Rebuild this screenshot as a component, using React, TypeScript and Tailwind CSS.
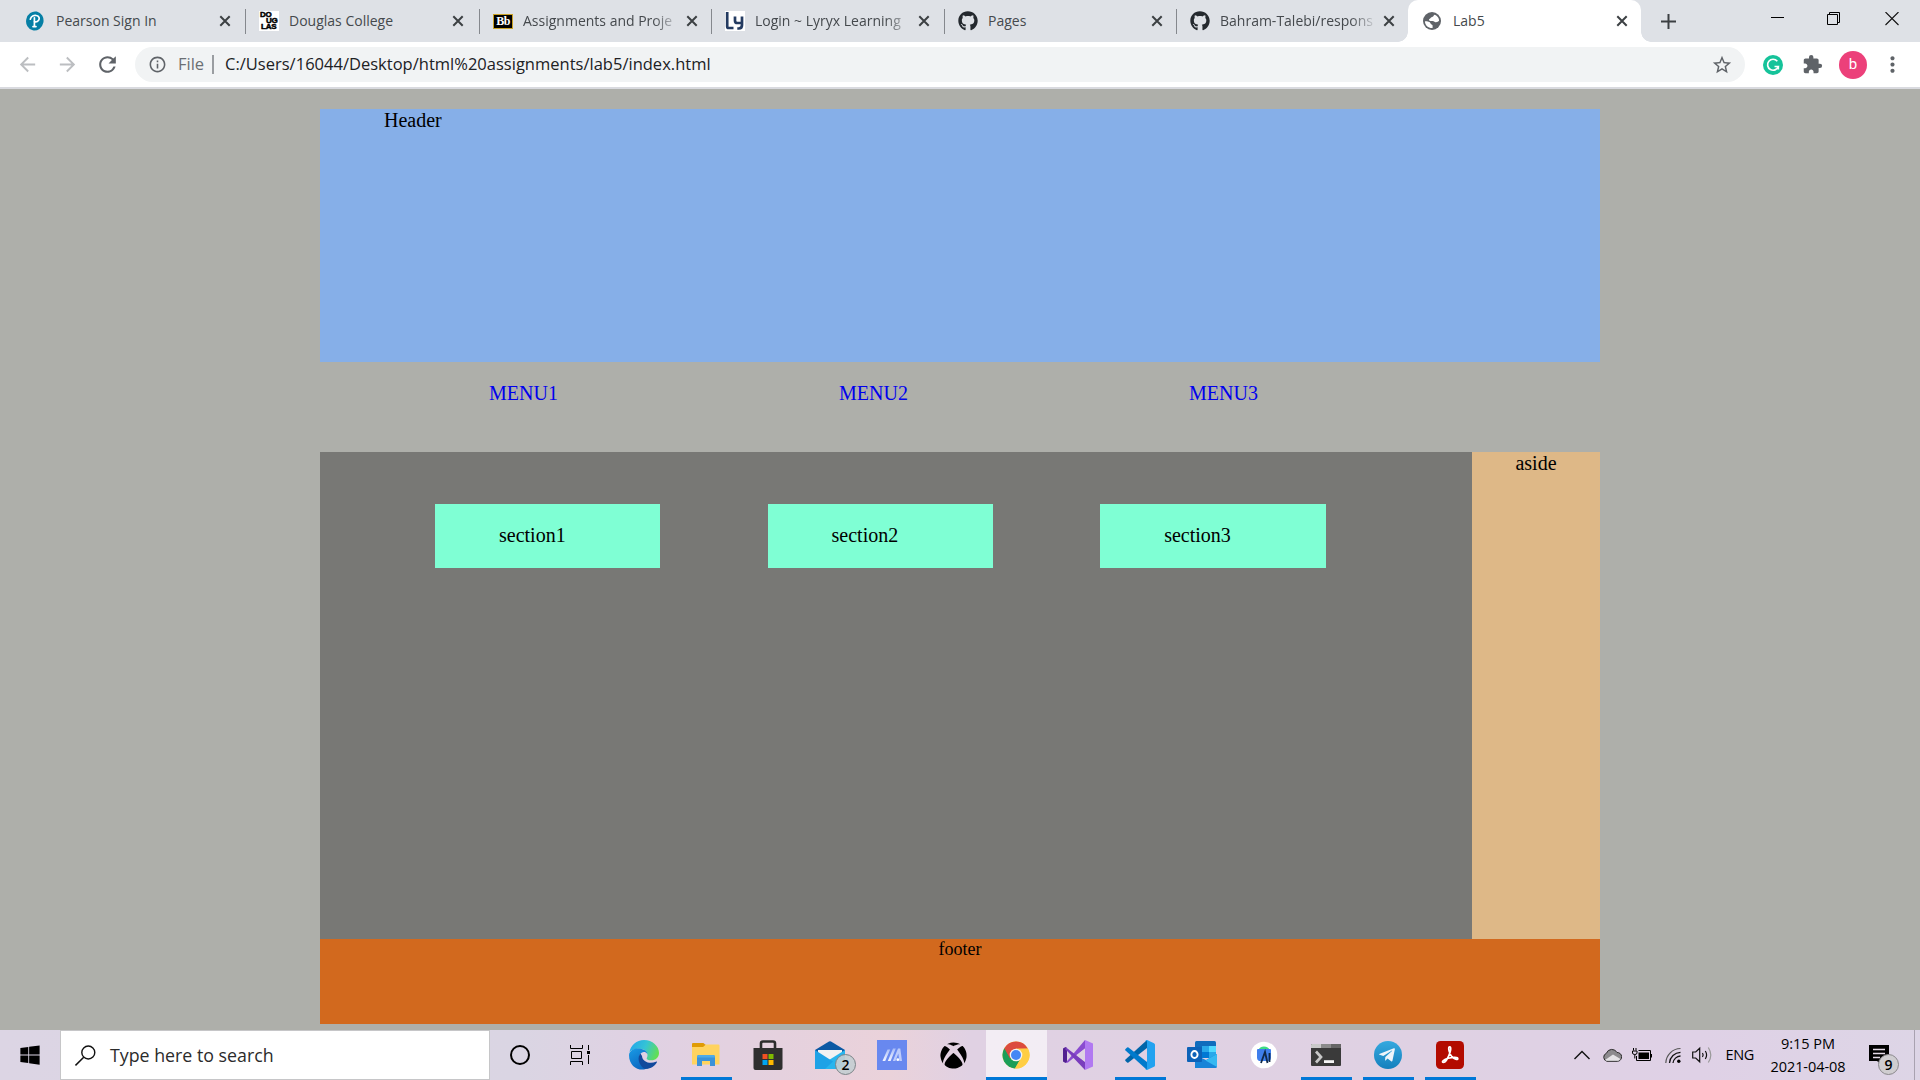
import type { ReactNode } from "react";
import { FaGithub, FaWindows, FaXbox, FaTelegramPlane } from "react-icons/fa";
import {
  MdArrowBack,
  MdArrowForward,
  MdExtension,
  MdInfoOutline,
  MdMoreVert,
  MdRefresh,
  MdStarBorder,
} from "react-icons/md";

/* ---------- Favicons ---------- */

const PearsonIcon = () => (
  <svg width="20" height="20" viewBox="0 0 20 20" className="-ml-px">
    <ellipse cx="9.8" cy="10" rx="8.7" ry="9.6" fill="#067fa5" transform="rotate(12 10 10)" />
    <path
      d="M5.3 8.2C6.2 5.3 9 4 11.4 4.5c2.700.5 3.500 3 2.200 4.800-1 1.400-2.700 1.800-4.400 1.300M9.400 6.800v8.600M8 15.600h3"
      fill="none"
      stroke="#fff"
      strokeWidth="1.7"
      strokeLinecap="round"
    />
  </svg>
);

const DouglasIcon = () => (
  <span className="flex h-5 w-5 flex-col bg-white pl-px font-['Liberation_Sans'] text-[8px] leading-[6px] font-bold tracking-[-0.2px] text-black [-webkit-text-stroke:0.5px_black]">
    <span className="pt-px">DO</span>
    <span className="pl-[6px]">UG</span>
    <span className="pl-px">LAS</span>
  </span>
);

const BlackboardIcon = () => (
  <span className="flex h-[15px] w-5 items-center justify-center border border-[#c9a227] bg-black font-['Liberation_Serif'] text-[12px] leading-none font-bold tracking-[-0.5px] text-white">
    Bb
  </span>
);

const LyryxIcon = () => (
  <svg width="20" height="20" viewBox="0 0 20 20">
    <rect width="20" height="20" fill="#fff" />
    <path
      d="M2.200 1v14.500q0 1.500 1.500 1.500H8.500M10 5.500v4.200q0 2.300 2.300 2.300h4.200M17 5.500v8.500q0 3.500-3.200 3.500h-1.500"
      fill="none"
      stroke="#243b61"
      strokeWidth="2.700"
    />
  </svg>
);

const GithubIcon = () => <FaGithub size={20} className="text-[#24292e]" />;

const GlobeIcon = () => (
  <svg width="18" height="18" viewBox="0 0 18 18">
    <circle cx="9" cy="9" r="9" fill="#5f6368" />
    <path
      d="M11 2.800c0 1.700-1.600 2.200-2.600 2.500-.9.300-1 1.700-2.400 1.900 0 1.200.3 1.700 1.500 1.700h2.200c1.300 0 1.600 1.100 2.800 1.300 1.500.2 2.800-.5 3.600-1.400C16.100 5.600 13.700 3 11 2.800z"
      fill="#fff"
    />
    <path d="M1.900 9.300c2.800 0 5.200.5 5.700 2.100.3 1.100 2 .9 2 2.200v2.500C5.500 16.400 2 13.500 1.900 9.300z" fill="#fff" />
  </svg>
);

const CloseX = () => (
  <svg width="12" height="12" viewBox="0 0 12 12" className="shrink-0">
    <path d="M1.300 1.300l9.400 9.400M10.700 1.300l-9.400 9.400" stroke="#3c4043" strokeWidth="2" />
  </svg>
);

type TabData = { title: string; icon: ReactNode; width?: string; faded?: boolean };

const tabs: TabData[] = [
  { title: "Pearson Sign In", icon: <PearsonIcon />, width: "w-[233px]" },
  { title: "Douglas College", icon: <DouglasIcon />, width: "w-[234px]" },
  { title: "Assignments and Proje", icon: <BlackboardIcon />, width: "w-[232px]", faded: true },
  { title: "Login ~ Lyryx Learning", icon: <LyryxIcon />, width: "w-[233px]", faded: true },
  { title: "Pages", icon: <GithubIcon />, width: "w-[232px]" },
  { title: "Bahram-Talebi/respons", icon: <GithubIcon />, width: "w-[232px]", faded: true },
];

function TabContent({ tab }: { tab: TabData }) {
  return (
    <>
      <span className="flex w-[30px] shrink-0 items-center">{tab.icon}</span>
      <span
        className={
          tab.faded
            ? "-mt-0.5 w-[154px] shrink-0 [mask-image:linear-gradient(to_right,black_130px,transparent_158px)]"
            : "-mt-0.5 w-[154px] shrink-0"
        }
      >
        {tab.title}
      </span>
      <span className="ml-[9px] flex">
        <CloseX />
      </span>
    </>
  );
}

function TabStrip() {
  return (
    <div className="flex h-[42px] bg-[#dee1e6] pl-[12px] text-[14px] whitespace-nowrap text-[#45494d]">
      {tabs.map((tab, i) => (
        <div key={tab.title} className={`flex h-[42px] shrink-0 items-center ${tab.width}`}>
          <span className={i === 0 ? "h-[25px] w-px shrink-0" : "h-[25px] w-px shrink-0 bg-[#85888d]"} />
          <span className="w-[13px] shrink-0" />
          <TabContent tab={tab} />
        </div>
      ))}
      <div className="relative flex h-[42px] w-[233px] shrink-0 items-center rounded-t-[10px] bg-white pl-[15px]">
        <span className="absolute bottom-0 -left-[10px] h-[10px] w-[10px] bg-[radial-gradient(circle_at_0_0,transparent_9.500px,white_10px)]" />
        <span className="absolute -right-[10px] bottom-0 h-[10px] w-[10px] bg-[radial-gradient(circle_at_100%_0,transparent_9.500px,white_10px)]" />
        <TabContent tab={{ title: "Lab5", icon: <GlobeIcon /> }} />
      </div>
      <svg width="15" height="15" viewBox="0 0 15 15" className="mt-[14px] ml-[20px]">
        <path d="M7.500 0v15M0 7.500h15" stroke="#3c4043" strokeWidth="2" />
      </svg>
      <div className="mt-[11px] mr-[21px] ml-auto flex h-4 items-center">
        <svg width="14" height="14" viewBox="0 0 14 14">
          <path d="M0 5.500h13" stroke="#000" />
        </svg>
        <svg width="14" height="14" viewBox="0 0 14 14" className="ml-[42px]">
          <path d="M.5 2.500h10v10h-10zM2.500 2.500v-2h10v10h-2" fill="none" stroke="#000" />
        </svg>
        <svg width="14" height="14" viewBox="0 0 14 14" className="ml-[44px]">
          <path d="M.5 0l13 13M13.500 0l-13 13" stroke="#111" strokeWidth="1.100" />
        </svg>
      </div>
    </div>
  );
}

function Toolbar() {
  return (
    <div className="flex h-[47px] items-center border-b-2 border-[#d9dadf] bg-white">
      <MdArrowBack size={23} className="ml-4 text-[#bcbec1]" />
      <MdArrowForward size={23} className="ml-[17px] text-[#bcbec1]" />
      <MdRefresh size={25} className="ml-4 text-[#5f6368]" />
      <div className="ml-[15px] flex h-[35px] w-[1610px] items-center rounded-full bg-[#f1f3f4] whitespace-nowrap">
        <MdInfoOutline size={19} className="ml-[13px] text-[#5f6368]" />
        <span className="ml-[11px] w-[34px] text-[16.500px] text-[#6b6f74]">File</span>
        <span className="h-[19px] w-0.5 bg-[#9a9da1]" />
        <span className="ml-[11px] text-[16.500px] tracking-[0.010px] text-[#202124]">
          C:/Users/16044/Desktop/html%20assignments/lab5/index.html
        </span>
        <MdStarBorder size={22} className="mr-[12px] ml-auto text-[#5f6368]" />
      </div>
      <svg width="20" height="20" viewBox="0 0 20 20" className="ml-[17.500px]">
        <circle cx="10" cy="10" r="10" fill="#15c39a" />
        <path
          d="M14.300 6.200A5.500 5.500 0 1 0 15.300 11.500H11.500M15.300 11v3.500"
          fill="none"
          stroke="#fff"
          strokeWidth="1.700"
        />
      </svg>
      <MdExtension size={21} className="ml-[19px] text-[#5f6368]" />
      <span className="ml-[16.500px] flex h-7 w-7 items-center justify-center rounded-full bg-[#ec407a] font-['Roboto'] text-[15px] leading-none text-white">
        b
      </span>
      <MdMoreVert size={25} className="ml-[13px] text-[#5f6368]" />
    </div>
  );
}

/* ---------- Web page ---------- */

function Page() {
  return (
    <div className="h-[941px] bg-[#aeafaa] pt-[20px] font-['Liberation_Serif',serif] text-[20px] leading-[23px] text-black">
      <div className="mx-auto w-[1280px]">
        <header className="h-[253px] bg-[#86afe8] pl-[64px]">Header</header>
        <nav className="flex h-[90px] pt-[20px] pl-[169px] text-[#0000ee]">
          {["MENU1", "MENU2", "MENU3"].map((m) => (
            <a key={m} className="w-[350px]">
              {m}
            </a>
          ))}
        </nav>
        <div className="flex h-[487px]">
          <main className="flex w-[1152px] gap-[107.200px] bg-[#787875] pt-[52px] pl-[115px]">
            {["section1", "section2", "section3"].map((s) => (
              <section key={s} className="h-[64px] w-[225.400px] bg-[#7fffd4] pt-[20px] pl-[64px]">
                {s}
              </section>
            ))}
          </main>
          <aside className="w-[128px] bg-[#deb887] text-center">aside</aside>
        </div>
        <footer className="h-[85px] bg-[#d2691e] text-center text-[18px] leading-[20px]">footer</footer>
      </div>
    </div>
  );
}

/* ---------- Taskbar icons ---------- */

const EdgeIcon = () => (
  <svg width="30" height="30" viewBox="0 0 30 30">
    <defs>
      <linearGradient id="edgeTop" x1="0" y1="0.300" x2="1" y2="0.600">
        <stop offset="0" stopColor="#22a7ea" />
        <stop offset="0.500" stopColor="#35c4d5" />
        <stop offset="1" stopColor="#64e04e" />
      </linearGradient>
      <linearGradient id="edgeLeft" x1="0" y1="0" x2="0.600" y2="1">
        <stop offset="0" stopColor="#1a9be5" />
        <stop offset="1" stopColor="#0a66c0" />
      </linearGradient>
    </defs>
    <path d="M.5 12C1.800 5 7.500 0 15 0c8.500 0 15 6.200 15 13 0 4.500-3.500 7.300-7.500 7.300-3.500 0-5.500-1.200-4.600-2.600C19.800 14.500 17.500 9 11 8.700 6.500 8.500 2 10 .5 12z" fill="url(#edgeTop)" />
    <path d="M0 15C.5 10.500 5 8.600 9.500 8.600c4.500 0 8.300 2.300 9 5.400-2-3-6-2.600-7.500.5C8.500 20 13 27.500 20 27.800 12 32.500 0 28 0 15z" fill="url(#edgeLeft)" />
    <path d="M11.500 13.500C8 17 9.300 25 15.500 28.700c5.500.8 10-2.500 12.300-6.200.4-.8-.2-1.200-.9-.8-5.400 2.700-13.600.5-13.900-5.700z" fill="#11499c" />
  </svg>
);

const ExplorerIcon = () => (
  <svg width="30" height="30" viewBox="0 0 30 30">
    <path d="M1 4q0-1 1-1h10q1 0 1.500 1l1.500 1-2 4H1z" fill="#e09b05" />
    <path d="M1 7h11l3-2.500h12.500q1 0 1 1V24.500H1z" fill="#ffd35f" />
    <path d="M6 26V17q0-2 2-2h14q2 0 2 2v9h-5v-5h-8v5z" fill="#3b92d9" />
    <path d="M6 16.500q0-1.500 2-1.500h14q2 0 2 1.500v1H6z" fill="#4fabe8" />
  </svg>
);

const StoreIcon = () => (
  <svg width="30" height="30" viewBox="0 0 30 30" className="-ml-px">
    <path d="M8 9V3.500Q8 1.500 10 1.500h10q2 0 2 2V9" fill="none" stroke="#2c2c2c" strokeWidth="2.600" />
    <path d="M.5 8h29v20q0 2-2 2h-25q-2 0-2-2z" fill="#2f2f2f" />
    <path d="M9.500 14h5v5h-5z" fill="#f25022" />
    <path d="M15.500 14h5v5h-5z" fill="#7fba00" />
    <path d="M9.500 20h5v5h-5z" fill="#00a4ef" />
    <path d="M15.500 20h5v5h-5z" fill="#ffb900" />
  </svg>
);

const MailIcon = () => (
  <span className="relative flex">
    <svg width="30" height="30" viewBox="0 0 30 30">
      <path d="M0 10L14 1.500q1-.5 2 0L30 10v7H0z" fill="#0c59a4" />
      <path d="M3 10h24v10H3z" fill="#f2f2f2" />
      <path d="M30 10v19H0l14-9z" fill="#28b5ee" />
      <path d="M0 10v19h10l8-7.500z" fill="#1ea2e6" />
    </svg>
    <span className="absolute top-[14px] left-[20px] flex h-[21px] w-[21px] items-center justify-center rounded-full border border-[#7b8488] bg-[#c4ced2]/90 text-[14px] leading-none font-semibold text-black">
      2
    </span>
  </span>
);

const MaIcon = () => (
  <svg width="30" height="30" viewBox="0 0 30 30">
    <defs>
      <linearGradient id="maStroke" x1="0" y1="1" x2="0" y2="0">
        <stop offset="0" stopColor="#f2f5ff" />
        <stop offset="1" stopColor="#a9bcf8" />
      </linearGradient>
    </defs>
    <rect width="30" height="30" fill="#6888ef" />
    <path d="M5.500 21l5-11.500h2.700l-5 11.500zM10.800 21L16 8.500h2.800L13.600 21z" fill="url(#maStroke)" />
    <path d="M15.800 21l5.200-12.500h2.300L25 21h-2.600l-1.100-7.500L18.400 21z" fill="#bccbfc" />
    <circle cx="20.800" cy="19.700" r="1.400" fill="#fff" />
  </svg>
);

const ChromeIcon = () => (
  <svg width="28" height="28" viewBox="0 0 28 28" className="-ml-px">
    <circle cx="14" cy="14" r="13.500" fill="#ffce44" />
    <path d="M14 14L2.300 7.200A13.500 13.500 0 0 0 13 27.500l6-10.500z" fill="#1b9e58" />
    <path d="M14 14L8 17.500 2.300 7.250A13.500 13.500 0 0 1 25.800 7.500L14 7.800z" fill="#dc4b3e" />
    <path d="M14 7.800h12A13.500 13.500 0 0 1 13 27.500l6.300-11z" fill="#ffce44" />
    <circle cx="14" cy="14" r="6.300" fill="#f4f4f4" />
    <circle cx="14" cy="14" r="5" fill="#4587f4" />
  </svg>
);

const VisualStudioIcon = () => (
  <svg width="30" height="30" viewBox="0 0 30 30">
    <path d="M0 8.500L2.500 7 4 8v14l-1.500 1L0 21.500z" fill="#52218f" />
    <path d="M2.500 23L22 0v8.500L5 22.500z" fill="#8a4bd0" />
    <path d="M2.500 7L22 22v8L2.500 9.500z" fill="#7a3dbd" />
    <path d="M4 11.300v7.400l3.700-3.700z" fill="#dfd2e3" />
    <path d="M22 0l8 3.500v23L22 30z" fill="#b179f1" />
    <path d="M22 8.500v13L13.500 15z" fill="#dfd2e3" />
  </svg>
);

const VSCodeIcon = () => (
  <svg width="30" height="30" viewBox="0 0 30 30">
    <path d="M22 0v8L3.500 22.500q-.7.500-1.400 0L.5 21q-.7-.7 0-1.400z" fill="#0065a9" />
    <path d="M22 30v-8L3.500 7.500q-.7-.5-1.400 0L.5 9q-.7.7 0 1.400z" fill="#007acc" />
    <path d="M22 0l7 3.300q1 .5 1 1.500v20.400q0 1-1 1.500L22 30q-1 .3-1.800-.5 1.800.5 1.800-1.500V2q0-2-1.800-1.500Q21-.3 22 0z" fill="#22a2f0" />
  </svg>
);

const OutlookIcon = () => (
  <svg width="30" height="30" viewBox="0 0 30 30">
    <path d="M8 2.500q0-1.500 1.500-1.500h18q1.500 0 1.500 1.500V16H8z" fill="#0f6cbd" />
    <path d="M15 6h7v7h-7z" fill="#28a8ea" />
    <path d="M22 6h7v7h-7z" fill="#50d9ff" />
    <path d="M15 12h7v6h-7z" fill="#0078d4" />
    <path d="M22 12h7v6h-7z" fill="#28a8ea" />
    <path d="M8 28h20.500q1.500 0 1.500-1.500V14L19 20 8 15z" fill="#1784d8" />
    <path d="M30 14v13L18.500 20.500z" fill="#35b8f1" />
    <rect y="7" width="15" height="15" rx="1" fill="#0c62b8" />
    <ellipse cx="7.500" cy="14.500" rx="3.100" ry="3.500" fill="none" stroke="#fff" strokeWidth="1.900" />
  </svg>
);

const AndroidStudioIcon = () => (
  <svg width="28" height="28" viewBox="0 0 28 28" className="-ml-px">
    <circle cx="14" cy="14" r="13.300" fill="#fff" />
    <path d="M8.500 9q1-3.500 5.500-3.500T19.500 9z" fill="#3ddc84" />
    <path d="M7 9q0-1 1-1h12q1 0 1 1v8q0 2-2 3h-10q-2-1-2-3z" fill="#3f7fec" />
    <path d="M11 22l4-11 2.500 11M19.500 12v9" fill="none" stroke="#10294a" strokeWidth="1.800" />
  </svg>
);

const TerminalIcon = () => (
  <svg width="30" height="22" viewBox="0 0 30 22">
    <rect width="30" height="22" rx="1" fill="#3a3a3a" />
    <path d="M0 4V1q0-1 1-1h9v4z" fill="#c9c9c9" />
    <path d="M10 0h10v4H10z" fill="#8b8b8b" />
    <path d="M20 0h9q1 0 1 1v3H20z" fill="#666" />
    <path d="M5 7.500l5 5.500-5 5.500" fill="none" stroke="#c8c8c8" strokeWidth="2.700" />
    <path d="M13 17.600h10" stroke="#f5f5f5" strokeWidth="2.800" />
  </svg>
);

const TelegramIcon = () => (
  <span className="flex h-7 w-7 items-center justify-center rounded-full bg-linear-to-b from-[#35a9df] to-[#1480bd] pr-0.5 text-[#eef5fa]">
    <FaTelegramPlane size={18} />
  </span>
);

const AcrobatIcon = () => (
  <svg width="28" height="28" viewBox="0 0 28 28">
    <rect width="28" height="28" rx="4.500" fill="#b30b00" />
    <path
      d="M13.200 6c1.700-1 2 2 .8 5.500C12.500 16 9.500 21.500 7.300 21.500c-2.300-.4.500-3 5-4.200 4.500-1.200 9.500-1.300 9.500.4 0 1.600-3.300.7-6-2.200C13.300 12.800 12 7 13.200 6z"
      fill="none"
      stroke="#fff"
      strokeWidth="1.700"
    />
  </svg>
);

type App = { name: string; icon: ReactNode; state?: "open" | "active" };

const apps: App[] = [
  { name: "edge", icon: <EdgeIcon /> },
  { name: "explorer", icon: <ExplorerIcon />, state: "open" },
  { name: "store", icon: <StoreIcon /> },
  { name: "mail", icon: <MailIcon /> },
  { name: "ma", icon: <MaIcon /> },
  { name: "xbox", icon: <FaXbox size={27} className="mr-0.5 text-black" /> },
  { name: "chrome", icon: <ChromeIcon />, state: "active" },
  { name: "visualstudio", icon: <VisualStudioIcon /> },
  { name: "vscode", icon: <VSCodeIcon />, state: "open" },
  { name: "outlook", icon: <OutlookIcon /> },
  { name: "androidstudio", icon: <AndroidStudioIcon /> },
  { name: "terminal", icon: <TerminalIcon />, state: "open" },
  { name: "telegram", icon: <TelegramIcon />, state: "open" },
  { name: "acrobat", icon: <AcrobatIcon />, state: "open" },
];

function Tray() {
  return (
    <div className="ml-auto flex items-center whitespace-nowrap">
      <svg width="16" height="10" viewBox="0 0 16 10">
        <path d="M.5 9L8 1.500 15.500 9" fill="none" stroke="#111" strokeWidth="1.400" />
      </svg>
      <svg width="20" height="14" viewBox="0 0 20 14" className="ml-3">
        <path d="M5 13.300a4.200 4.200 0 0 1-.6-8A5.800 5.800 0 0 1 15 4.500a4.400 4.400 0 0 1 .5 8.800z" fill="#8d8b8e" stroke="#2c2c2c" />
        <path d="M3 12l8-5.500 7.500 4.500-2 1.800H4.500z" fill="#e5e3e6" />
      </svg>
      <svg width="20" height="14" viewBox="0 0 20 14" className="ml-[10px]">
        <path d="M6.500 4.500h10.500v6.500h-10.500z" fill="#000" />
        <path d="M4.500 8v4.500h14V2.500H6.500M19.500 6v3.500M1.500 0v2.500M4 0v2.500M.5 3h4.500v2q0 1.500-2.200 1.500T.5 5zM2.800 6.500v4" fill="none" stroke="#000" />
      </svg>
      <svg width="17" height="17" viewBox="0 0 17 17" className="ml-[13px]">
        <path d="M.8 16A15 15 0 0 1 15.500 1.500" fill="none" stroke="#555" strokeWidth="1.200" />
        <path d="M4.500 16A11.500 11.500 0 0 1 15.500 5.300M8 16A8 8 0 0 1 15.500 9" fill="none" stroke="#111" strokeWidth="1.300" />
        <circle cx="13.800" cy="14.300" r="1.700" fill="#000" />
      </svg>
      <svg width="21" height="18" viewBox="0 0 21 18" className="ml-[10px]">
        <path d="M.7 6h3l4-3.800v13.600L3.700 12h-3zM10.500 7q1.300 2 0 4M13.300 5q2.600 4 0 8" fill="none" stroke="#111" strokeWidth="1.200" />
        <path d="M16.300 1.500q5 7.500 0 15" fill="none" stroke="#999" strokeWidth="1.200" />
      </svg>
      <span className="ml-[13px] w-[30px] text-[14.500px] tracking-[-0.300px]">ENG</span>
      <div className="ml-[10.500px] flex w-[84px] flex-col text-center text-[14.500px] leading-[23px] tracking-[-0.050px]">
        <span>9:15 PM</span>
        <span>2021-04-08</span>
      </div>
      <div className="relative ml-[19px] flex">
        <svg width="20" height="20" viewBox="0 0 20 20">
          <path d="M0 0h20v16h-7v4l-5-4H0z" fill="#000" />
          <path d="M4 4.500h12M4 8.500h12M4 12.500h7" stroke="#e5dbe7" strokeWidth="1.300" />
        </svg>
        <span className="absolute top-[9px] left-[9px] flex h-[21px] w-[21px] items-center justify-center rounded-full border border-[#8a888c] bg-[#cfcdd0] text-[14px] leading-none font-semibold text-black">
          9
        </span>
      </div>
      <span className="mr-[5px] ml-[25px] h-[50px] w-px bg-[#a9a2b0]" />
    </div>
  );
}

function Taskbar() {
  return (
    <div className="flex h-[50px] items-center bg-[linear-gradient(90deg,#dcd5e4_0px,#dad5e3_520px,#e0d1e3_650px,#e5d1de_780px,#ead2da_890px,#e0d1e3_970px,#dfd1e3_1450px,#dfd1e6_1700px,#ddd5e6_1920px)] text-black">
      <span className="flex w-[60px] justify-center">
        <FaWindows size={22} className="text-black" />
      </span>
      <div className="flex h-[50px] w-[430px] items-center border border-[#c6c6c8] bg-white">
        <svg width="21" height="21" viewBox="0 0 21 21" className="ml-[14px]">
          <circle cx="13.300" cy="7.500" r="6.500" fill="none" stroke="#111" strokeWidth="1.400" />
          <path d="M8.700 12.200L.5 20.400" stroke="#111" strokeWidth="1.500" />
        </svg>
        <span className="ml-[14px] text-[17.800px] text-[#2b2b2b]">Type here to search</span>
      </div>
      <span className="flex w-[60px] justify-center">
        <span className="h-5 w-5 rounded-full border-[2.500px] border-black" />
      </span>
      <span className="mr-[3px] flex w-[60px] justify-center">
        <svg width="20" height="20" viewBox="0 0 20 20">
          <path d="M.5 0v3.500h12V0M.5 20v-3.500h12V20M1.500 6.500h10v7h-10zM18.500 0v5M18.500 10v9" fill="none" stroke="#000" />
          <path d="M17 6h3v3h-3z" fill="#000" />
        </svg>
      </span>
      {apps.map((app) => (
        <span
          key={app.name}
          className={
            app.state === "active"
              ? "relative flex h-[50px] w-[62px] shrink-0 items-center justify-center border-l border-transparent bg-white/60 bg-clip-padding"
              : "relative flex h-[50px] w-[62px] shrink-0 items-center justify-center"
          }
        >
          {app.icon}
          {app.state === "open" && <span className="absolute bottom-0 left-[6px] h-[3px] w-[51px] bg-[#0078d7]" />}
          {app.state === "active" && <span className="absolute bottom-0 left-0 h-[3px] w-[61px] bg-[#0078d7]" />}
        </span>
      ))}
      <Tray />
    </div>
  );
}

export default function App() {
  return (
    <div className="h-[1080px] w-[1920px] overflow-hidden font-['Open_Sans','Noto_Sans',sans-serif]">
      <TabStrip />
      <Toolbar />
      <Page />
      <Taskbar />
    </div>
  );
}
